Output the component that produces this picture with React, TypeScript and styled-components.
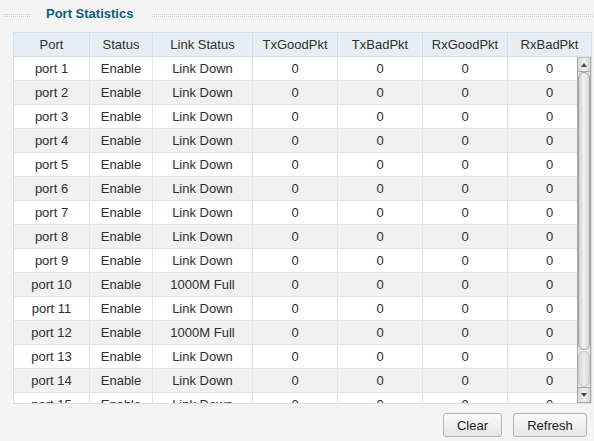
import React from 'react';
import styled, { createGlobalStyle } from 'styled-components';

const GlobalStyle = createGlobalStyle`
  html, body {
    margin: 0;
    padding: 0;
    background: #f4f4f4;
    font-family: "Liberation Sans", Arial, sans-serif;
  }
`;

const Page = styled.div`
  width: 594px;
  height: 441px;
  overflow: hidden;
  background: #f4f4f4;
`;

const TitleRow = styled.div`
  display: flex;
  align-items: center;
  height: 20px;
  padding-top: 4px;
`;

const Dots = styled.div<{ $grow?: boolean }>`
  height: 5px;
  margin-top: 3px;
  width: ${({ $grow }) => ($grow ? 'auto' : '29px')};
  flex: ${({ $grow }) => ($grow ? 1 : 'none')};
  margin-left: ${({ $grow }) => ($grow ? '0' : '2px')};
  background-image: linear-gradient(90deg, #f4f4f4 1px, transparent 1px),
    linear-gradient(#f4f4f4 1px, #bccedc 1px);
  background-size: 2px 2px;
`;

const Title = styled.h2`
  margin: 0 18px 0 15px;
  font-size: 13px;
  font-weight: bold;
  line-height: 20px;
  color: #0f5c7c;
`;

const TableBox = styled.div`
  position: relative;
  margin: 8px 2px 0 13px;
  border: 1px solid #d3dfe8;
  background: #fff;
`;

const Grid = styled.table`
  width: 100%;
  table-layout: fixed;
  border-collapse: separate;
  border-spacing: 0;
  font-size: 13px;
  color: #2e2e2e;
`;

const HeadCell = styled.th`
  height: 23px;
  padding: 0;
  font-weight: normal;
  text-align: center;
  background: #e6eef4;
  border-bottom: 1px solid #d3dfe8;
  border-left: 1px solid #d3dfe8;
  &:first-child {
    border-left: none;
  }
`;

const BodyRow = styled.tr<{ $alt: boolean }>`
  height: 24px;
  background: ${({ $alt }) => ($alt ? '#f1f1f1' : '#ffffff')};
`;

const Cell = styled.td`
  padding: 0;
  text-align: center;
  line-height: 16px;
  white-space: nowrap;
  border-bottom: 1px solid #dce6ee;
  border-left: 1px solid #dce6ee;
  &:first-child {
    border-left: none;
  }
`;

const BodyScroll = styled.div`
  height: 346px;
  overflow: hidden;
`;

const ScrollBar = styled.div`
  position: absolute;
  top: 24px;
  right: 0;
  bottom: 0;
  width: 14px;
  display: flex;
  flex-direction: column;
  box-sizing: border-box;
  border: 1px solid #a9a9a9;
  border-top: none;
  background: linear-gradient(90deg, #e2e2e2, #f0f0f0 50%, #e2e2e2);
`;

const ArrowBox = styled.div<{ $down?: boolean }>`
  height: 15px;
  flex: none;
  display: flex;
  align-items: center;
  justify-content: center;
  box-sizing: border-box;
  background: linear-gradient(90deg, #d6d6d6, #eeeeee 50%, #d6d6d6);
  border-top: ${({ $down }) => ($down ? '1px solid #a9a9a9' : '1px solid #c8c8c8')};
  border-bottom: ${({ $down }) => ($down ? 'none' : '1px solid #a9a9a9')};
  &::after {
    content: '';
    width: 0;
    height: 0;
    border-left: 3.5px solid transparent;
    border-right: 3.5px solid transparent;
    ${({ $down }) =>
      $down ? 'border-top: 4px solid #4a4a4a;' : 'border-bottom: 4px solid #4a4a4a;'}
  }
`;

const Thumb = styled.div`
  height: 278px;
  flex: none;
  box-sizing: border-box;
  border: 1px solid #a3a3a3;
  border-radius: 6px;
  background: linear-gradient(90deg, #cfcfcf, #f2f2f2 45%, #d8d8d8);
`;

const Track = styled.div`
  flex: 1;
  margin-top: 1px;
  box-sizing: border-box;
  border: 1px solid #c6c6c6;
  border-radius: 6px;
  background: linear-gradient(90deg, #d9d9d9, #ececec 50%, #d9d9d9);
`;

const Actions = styled.div`
  display: flex;
  justify-content: flex-end;
  gap: 11px;
  margin-top: 9px;
  padding-right: 7px;
`;

const Button = styled.button<{ $w: number }>`
  width: ${({ $w }) => $w}px;
  height: 24px;
  padding: 0;
  font-family: "Liberation Sans", Arial, sans-serif;
  font-size: 13px;
  color: #222;
  border: 1px solid #b3b3b3;
  border-radius: 3px;
  background: linear-gradient(#fafafa, #e6e6e6);
`;

const widths = [75, 63, 100, 85, 85, 85, 84];
const headers = ['Port', 'Status', 'Link Status', 'TxGoodPkt', 'TxBadPkt', 'RxGoodPkt', 'RxBadPkt'];

const ports = Array.from({ length: 15 }, (_, i) => ({
  name: `port ${i + 1}`,
  status: 'Enable',
  link: i === 9 || i === 11 ? '1000M Full' : 'Link Down',
}));

const Cols = () => (
  <colgroup>
    {widths.map((w, i) => (
      <col key={i} style={{ width: w }} />
    ))}
  </colgroup>
);

export default function App() {
  return (
    <Page>
      <GlobalStyle />
      <TitleRow>
        <Dots />
        <Title>Port Statistics</Title>
        <Dots $grow />
      </TitleRow>
      <TableBox>
        <Grid>
          <Cols />
          <thead>
            <tr>
              {headers.map((h) => (
                <HeadCell key={h}>{h}</HeadCell>
              ))}
            </tr>
          </thead>
        </Grid>
        <BodyScroll>
          <Grid>
            <Cols />
            <tbody>
              {ports.map((p, i) => (
                <BodyRow key={p.name} $alt={i % 2 === 1}>
                  <Cell>{p.name}</Cell>
                  <Cell>{p.status}</Cell>
                  <Cell>{p.link}</Cell>
                  <Cell>0</Cell>
                  <Cell>0</Cell>
                  <Cell>0</Cell>
                  <Cell>0</Cell>
                </BodyRow>
              ))}
            </tbody>
          </Grid>
        </BodyScroll>
        <ScrollBar>
          <ArrowBox />
          <Thumb />
          <Track />
          <ArrowBox $down />
        </ScrollBar>
      </TableBox>
      <Actions>
        <Button $w={59}>Clear</Button>
        <Button $w={74}>Refresh</Button>
      </Actions>
    </Page>
  );
}
